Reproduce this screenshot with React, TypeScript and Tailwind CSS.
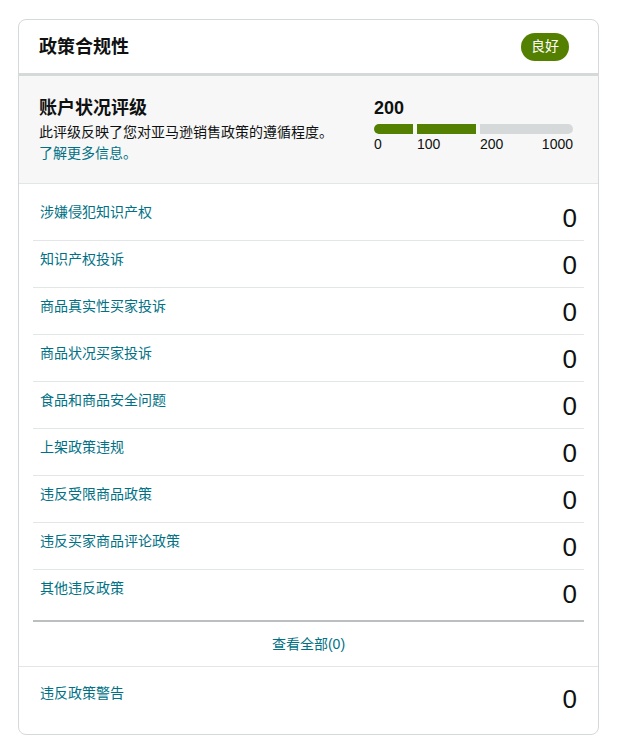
const rows = [
  "涉嫌侵犯知识产权",
  "知识产权投诉",
  "商品真实性买家投诉",
  "商品状况买家投诉",
  "食品和商品安全问题",
  "上架政策违规",
  "违反受限商品政策",
  "违反买家商品评论政策",
  "其他违反政策",
];

const font = { fontFamily: '"Liberation Sans", "Noto Sans CJK SC", sans-serif' };

export default function App() {
  return (
    <div className="min-h-screen bg-white pt-[19px] pl-[18px]" style={font}>
      <div className="w-[581px] rounded-[8px] border border-[#d5d9d9] bg-white overflow-hidden text-[#0f1111]">
        {/* Header */}
        <div className="h-[56px] flex items-center justify-between pl-5 pr-[29px] border-b-[3px] border-[#d5d9d9]">
          <h2 className="text-[18px] font-bold leading-6">政策合规性</h2>
          <span className="h-[28px] w-[48px] rounded-full bg-[#538000] text-white text-[14px] flex items-center justify-center">
            良好
          </span>
        </div>

        {/* Account health rating */}
        <div className="bg-[#f7f7f7] border-b border-[#e3e6e6] pl-5 pr-[25px] pt-[20px] pb-[19px] flex justify-between">
          <div>
            <div className="text-[18px] font-bold leading-6">账户状况评级</div>
            <div className="text-[14px] leading-[21px] mt-[2px]">此评级反映了您对亚马逊销售政策的遵循程度。</div>
            <a className="text-[14px] leading-[21px] text-[#007185] block">了解更多信息。</a>
          </div>
          <div className="w-[199px]">
            <div className="text-[18px] font-bold leading-6">200</div>
            <div className="flex gap-[4px] mt-[4px] h-[10px]">
              <div className="w-[39px] bg-[#538000] rounded-l-full" />
              <div className="w-[59px] bg-[#538000]" />
              <div className="flex-1 bg-[#d5d9d9] rounded-r-full" />
            </div>
            <div className="flex text-[14px] leading-[18px] mt-[1px]">
              <span className="w-[43px]">0</span>
              <span className="w-[63px]">100</span>
              <span className="flex-1">200</span>
              <span>1000</span>
            </div>
          </div>
        </div>

        {/* Rows */}
        <div className="px-[14px] pt-[10px]">
          {rows.map((label, i) => (
            <div
              key={label}
              className={`flex justify-between pl-[7px] pr-[7px] ${
                i === rows.length - 1 ? "h-[50px]" : "h-[47px] border-b border-[#e3e6e6]"
              }`}
            >
              <span className="text-[14px] leading-[18px] pt-[9px] text-[#007185]">{label}</span>
              <span className="text-[26px] leading-[28px] pt-[10px]">0</span>
            </div>
          ))}
          <div className="border-t-2 border-[#bbbfbf] h-[46px] flex items-center justify-center">
            <a className="text-[14px] text-[#007185]">查看全部(0)</a>
          </div>
        </div>

        {/* Warnings */}
        <div className="border-t border-[#e3e6e6] px-[14px] h-[68px]">
          <div className="flex justify-between pl-[7px] pr-[7px] pt-[17px]">
            <span className="text-[14px] leading-[18px] text-[#007185]">违反政策警告</span>
            <span className="text-[26px] leading-[28px] pt-[1px]">0</span>
          </div>
        </div>
      </div>
    </div>
  );
}
